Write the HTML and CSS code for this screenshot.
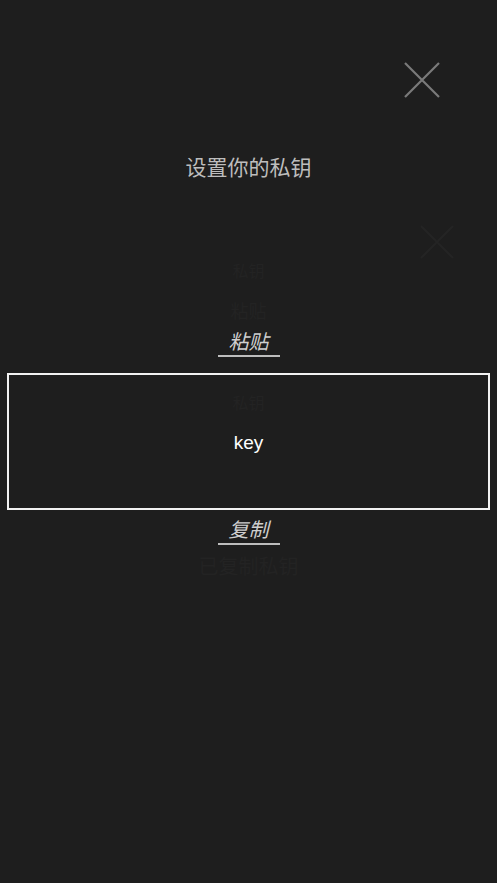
FILE: index.html
```html
<!doctype html>
<html lang="zh">
<head>
    <title>设置你的私钥</title>
    <meta charset="utf-8" name="viewport" content="width=device-width,initial-scale=1">
    <link rel="stylesheet" href="styles.css">
</head>
<body>
    <div class="close_row">
        <svg class="close" width="36" height="36" viewBox="0 0 36 36">
            <path d="M1 1 L35 35 M35 1 L1 35" stroke="#7a7a7a" stroke-width="2.2" fill="none"/>
        </svg>
    </div>
    <div class="title">设置你的私钥</div>
    <svg class="ghost_close" width="34" height="34" viewBox="0 0 34 34">
        <path d="M1 1 L33 33 M33 1 L1 33" stroke="#242424" stroke-width="2" fill="none"/>
    </svg>
    <div class="ghost ghost_a">私钥</div>
    <div class="ghost ghost_b">粘贴</div>
    <div class="link_row"><span class="link">粘贴</span></div>
    <div class="key_box">
        <div class="ghost ghost_c">私钥</div>
        <div class="key_text">key</div>
    </div>
    <div class="link_row link_row_copy"><span class="link">复制</span></div>
    <div class="ghost ghost_d">已复制私钥</div>
</body>
</html>
```
FILE: styles.css
```css
body{
    margin: 0;
    background-color: #1e1e1e;
    font-family: "Noto Sans CJK SC", "Noto Sans", sans-serif;
    user-select: none;
    position: relative;
    min-height: 883px;
}
.close_row{
    display: flex;
    justify-content: flex-end;
    padding: 62px 57px 0 0;
}
.close{
    display: block;
}
.title{
    margin-top: 53px;
    text-align: center;
    font-size: 21px;
    line-height: 30px;
    color: #bdbdbd;
}
.ghost_close{
    position: absolute;
    top: 225px;
    left: 420px;
}
.ghost{
    text-align: center;
    color: #232323;
}
.ghost_a{
    margin-top: 81px;
    font-size: 16px;
    line-height: 16px;
}
.ghost_b{
    margin-top: 22px;
    font-size: 18px;
    line-height: 20px;
}
.link_row{
    margin-top: 7px;
    text-align: center;
}
.link{
    display: inline-block;
    padding: 0 11px;
    font-size: 20px;
    line-height: 28px;
    font-style: italic;
    color: #cfcfcf;
    border-bottom: 2px solid #bdbdbd;
}
.key_box{
    margin: 16px 7px 0 7px;
    height: 133px;
    border: 2px solid #f2f2f2;
    text-align: center;
}
.ghost_c{
    margin-top: 17px;
    font-size: 16px;
    line-height: 20px;
}
.key_text{
    margin-top: 19px;
    font-family: "Liberation Sans", Arial, sans-serif;
    font-size: 19px;
    line-height: 24px;
    color: #ffffff;
}
.link_row_copy{
    margin-top: 5px;
}
.ghost_d{
    margin-top: 10px;
    font-size: 20px;
    line-height: 22px;
}
```
